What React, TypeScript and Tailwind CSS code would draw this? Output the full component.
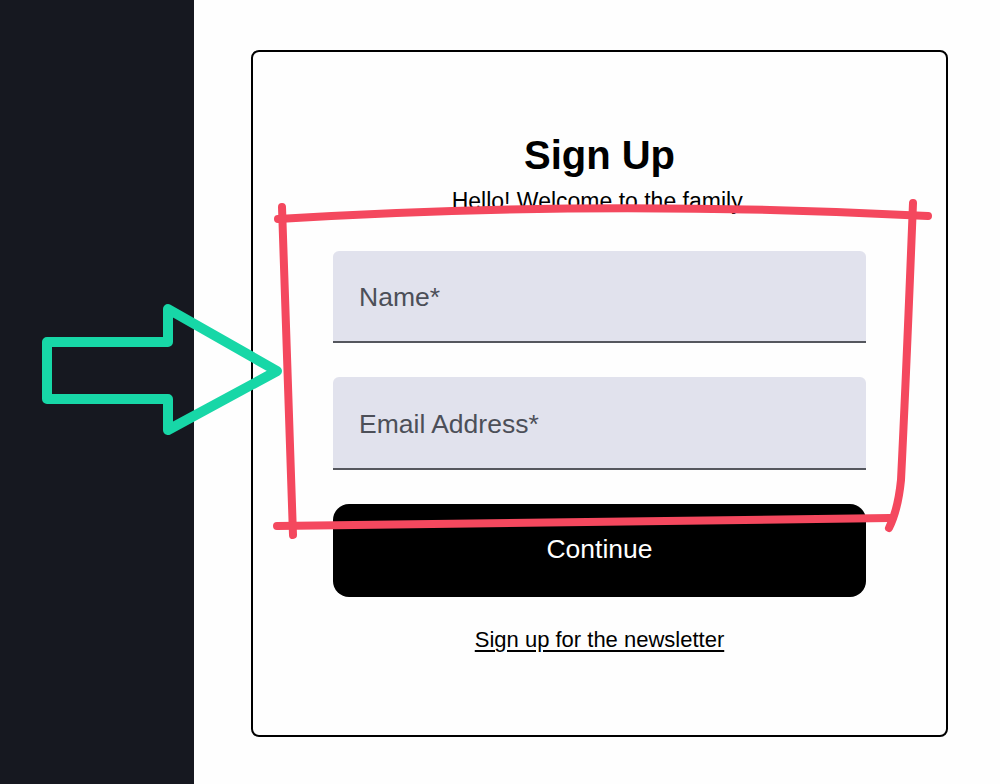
import React from "react";

// hand-drawn markup laid over the screenshot
function Annotations() {
    return (
        <svg
            className="absolute inset-0 pointer-events-none"
            width="1000"
            height="784"
            viewBox="0 0 1000 784"
            fill="none"
        >
            <g stroke="#f4485e" strokeWidth="8" strokeLinecap="round" strokeLinejoin="round">
                <path d="M278 219 Q600 199 928 216" />
                <path d="M282 207 Q288 370 293 535" />
                <path d="M913 203 Q906 380 901 480 Q898 510 889 528" />
                <path d="M277 526 Q600 522 890 518" />
            </g>
            <path
                d="M47 342 L168 342 L168 309 L277 371 L168 430 L168 399 L47 399 Z"
                stroke="#17d7a7"
                strokeWidth="10"
                strokeLinejoin="round"
            />
        </svg>
    );
}

export default function App(): React.ReactNode {
    return (
        <div className="relative flex w-[1000px] h-[784px] overflow-hidden font-['Liberation_Sans',Arial,sans-serif]">
            <div className="w-[194px] shrink-0 bg-[#161820]" />

            <div className="flex-1 bg-[#fefefe] pt-[50px] pl-[57px] pr-[52px]">
                <div className="h-[687px] border-2 border-black rounded-lg flex flex-col items-center pt-[79px]">
                    <h1 className="text-[40px] leading-[48px] font-bold text-black">Sign Up</h1>
                    <p className="mt-[8px] text-[23px] leading-[28px] text-black">Hello! Welcome to the family.</p>

                    <div className="mt-[36px] w-[533px] flex flex-col gap-[34px]">
                        <input
                            type="text"
                            placeholder="Name*"
                            className="h-[92px] w-full bg-[#e1e2ed] rounded-t-md border-b-2 border-[#55575e] px-[26px] pt-[3px] text-[26.5px] text-black placeholder:text-[#4c4f58] outline-none"
                        />
                        <input
                            type="email"
                            placeholder="Email Address*"
                            className="h-[93px] w-full bg-[#e1e2ed] rounded-t-md border-b-2 border-[#55575e] px-[26px] pt-[3px] text-[26.5px] text-black placeholder:text-[#4c4f58] outline-none"
                        />
                        <button className="h-[93px] w-full bg-black text-white rounded-2xl text-[26.5px] leading-none pb-[3px]">
                            Continue
                        </button>
                    </div>

                    <a href="#" className="mt-[30px] text-[22px] leading-[26px] text-black underline underline-offset-[3px]">
                        Sign up for the newsletter
                    </a>
                </div>
            </div>

            <Annotations />
        </div>
    );
}
